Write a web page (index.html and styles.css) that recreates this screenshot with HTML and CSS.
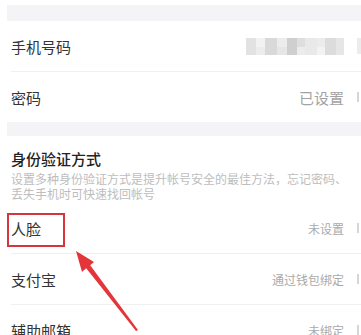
FILE: index.html
```html
<!DOCTYPE html>
<html lang="zh-CN">
<head>
    <meta charset="UTF-8">
    <meta name="viewport" content="width=device-width, initial-scale=1.0">
    <title>帐号与安全</title>
    <link rel="stylesheet" href="styles.css">
</head>
<body>
    <div class="page">
        <div class="gap gap-top"></div>

        <div class="group">
            <div class="row">
                <span class="label">手机号码</span>
                <span class="value">
                    <svg class="blur" width="98" height="17" viewBox="0 0 98 17">
                        <rect x="0" y="0" width="98" height="17" fill="#ececec"/>
                        <rect x="0" y="0" width="10" height="17" fill="#e2e2e2"/>
                        <rect x="10" y="0" width="9" height="9" fill="#f2f2f2"/>
                        <rect x="19" y="0" width="12" height="17" fill="#d9d9d9"/>
                        <rect x="31" y="9" width="10" height="8" fill="#e6e6e6"/>
                        <rect x="41" y="0" width="10" height="17" fill="#cfcfcf"/>
                        <rect x="51" y="0" width="8" height="9" fill="#dedede"/>
                        <rect x="59" y="0" width="12" height="17" fill="#e9e9e9"/>
                        <rect x="71" y="9" width="8" height="8" fill="#f3f3f3"/>
                        <rect x="79" y="0" width="11" height="17" fill="#dcdcdc"/>
                        <rect x="90" y="0" width="8" height="17" fill="#e6e6e6"/>
                    </svg>
                </span>
                <span class="chev chev-faint"></span>
            </div>
            <div class="row">
                <span class="label">密码</span>
                <span class="value">已设置</span>
                <span class="chev"></span>
            </div>
        </div>

        <div class="gap"></div>

        <div class="group">
            <div class="section-head">
                <h2>身份验证方式</h2>
                <p>设置多种身份验证方式是提升帐号安全的最佳方法，忘记密码、丢失手机时可快速找回帐号</p>
            </div>
            <div class="row">
                <span class="label">人脸</span>
                <span class="value value-small">未设置</span>
                <span class="chev"></span>
            </div>
            <div class="row">
                <span class="label">支付宝</span>
                <span class="value value-small">通过钱包绑定</span>
                <span class="chev"></span>
            </div>
            <div class="row">
                <span class="label">辅助邮箱</span>
                <span class="value value-small">未绑定</span>
                <span class="chev"></span>
            </div>
        </div>

        <!-- пометки поверх скриншота -->
        <div class="mark-box"></div>
        <svg class="mark-arrow" width="361" height="335" viewBox="0 0 361 335">
            <polygon fill="#e4363a"
                points="76,251 94,262 90.2,265.3 138,330 136,331 86.2,268.3 82,272"/>
        </svg>
    </div>
</body>
</html>
```

FILE: styles.css
```css
body {
    margin: 0;
    background-color: #fff;
    font-family: "Noto Sans CJK SC", "Noto Sans", sans-serif;
    color: #333;
    overflow: hidden;
}

.page {
    position: relative;
    width: 365px;
    height: 335px;
    padding-left: 7px;
    overflow: hidden;
}

.gap {
    height: 14px;
    background-color: #f4f4f6;
}

.gap-top {
    margin-top: 5px;
    height: 16px;
}

.group {
    background-color: #fff;
}

.row {
    display: flex;
    align-items: center;
    height: 50px;
    margin-left: 4px;
    padding-right: 8px;
    border-bottom: 1px solid #f0f0f0;
}

.row:last-child {
    border-bottom: none;
}

.label {
    flex: 1;
    font-size: 15px;
    color: #333;
}

.value {
    display: flex;
    align-items: center;
    font-size: 15px;
    color: #a3a3a3;
}

.value-small {
    font-size: 12px;
    color: #aaa;
}

.blur {
    display: block;
}

.chev {
    width: 7px;
    height: 10px;
    margin-left: 13px;
    background:
        linear-gradient(#d6d6d6, #d6d6d6) left top / 2px 10px no-repeat;
}

.chev-faint {
    background:
        linear-gradient(#ececec, #ececec) left top / 4px 16px no-repeat;
    height: 16px;
}

.section-head {
    margin-left: 4px;
    padding: 13px 0 2px;
}

.section-head h2 {
    margin: 0;
    font-size: 15px;
    line-height: 20px;
    font-weight: 500;
    color: #222;
}

.section-head p {
    width: 340px;
    margin: 2px 0 0;
    font-size: 12px;
    line-height: 15px;
    color: #bdbdbd;
}

.mark-box {
    position: absolute;
    left: 7px;
    top: 213px;
    width: 54px;
    height: 30px;
    border: 2px solid #d6353d;
}

.mark-arrow {
    position: absolute;
    left: 0;
    top: 0;
    pointer-events: none;
}
```
